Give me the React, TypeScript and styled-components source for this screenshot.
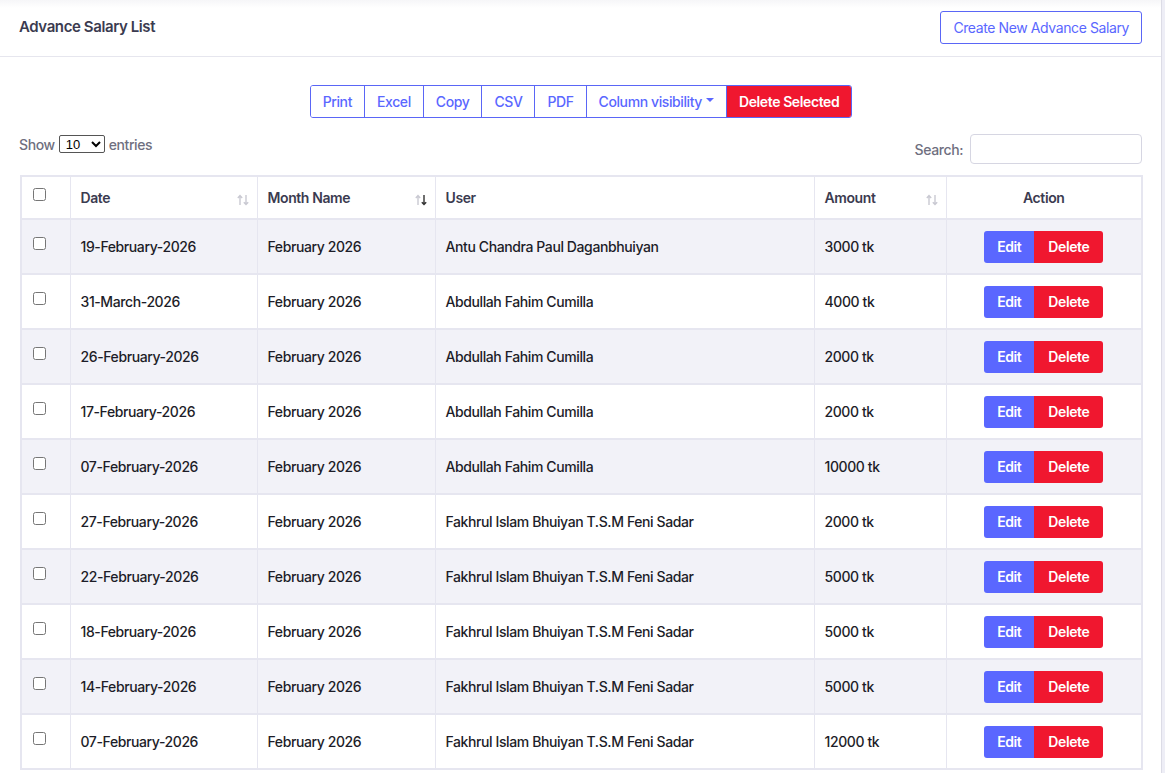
import React from 'react';
import styled, { createGlobalStyle } from 'styled-components'

const GlobalStyle = createGlobalStyle`
  html, body {
    margin: 0;
    padding: 0;
    background: #eeeef6;
    font-family: Inter, "Noto Sans", sans-serif;
    letter-spacing: -0.4px;
  }
`

const rows = [
  { date: '19-February-2026', month: 'February 2026', user: 'Antu Chandra Paul Daganbhuiyan', amount: '3000 tk' },
  { date: '31-March-2026', month: 'February 2026', user: 'Abdullah Fahim Cumilla', amount: '4000 tk' },
  { date: '26-February-2026', month: 'February 2026', user: 'Abdullah Fahim Cumilla', amount: '2000 tk' },
  { date: '17-February-2026', month: 'February 2026', user: 'Abdullah Fahim Cumilla', amount: '2000 tk' },
  { date: '07-February-2026', month: 'February 2026', user: 'Abdullah Fahim Cumilla', amount: '10000 tk' },
  { date: '27-February-2026', month: 'February 2026', user: 'Fakhrul Islam Bhuiyan T.S.M Feni Sadar', amount: '2000 tk' },
  { date: '22-February-2026', month: 'February 2026', user: 'Fakhrul Islam Bhuiyan T.S.M Feni Sadar', amount: '5000 tk' },
  { date: '18-February-2026', month: 'February 2026', user: 'Fakhrul Islam Bhuiyan T.S.M Feni Sadar', amount: '5000 tk' },
  { date: '14-February-2026', month: 'February 2026', user: 'Fakhrul Islam Bhuiyan T.S.M Feni Sadar', amount: '5000 tk' },
  { date: '07-February-2026', month: 'February 2026', user: 'Fakhrul Islam Bhuiyan T.S.M Feni Sadar', amount: '12000 tk' },
]

const exportButtons = ['Print', 'Excel', 'Copy', 'CSV', 'PDF']

const SortIcon = ({ active }: { active?: 'asc' | 'desc' }) => (
  <SortWrap>
    <svg width="14" height="14" viewBox="0 0 14 14">
      <g fill="none" strokeWidth="1.4">
        <path d="M4 12V2.5M1.8 4.8 4 2.5l2.2 2.3" stroke={active === 'asc' ? '#333' : '#c9c9d2'} />
        <path d="M10 2v9.5M7.8 9.2 10 11.5l2.2-2.3" stroke={active === 'desc' ? '#333' : '#c9c9d2'} />
      </g>
    </svg>
  </SortWrap>
)

const App = () => {
  return (
    <>
      <GlobalStyle />
      <Card>
        <CardHeader>
          <Title>Advance Salary List</Title>
          <OutlineButton>Create New Advance Salary</OutlineButton>
        </CardHeader>

        <CardBody>
          <ButtonGroupRow>
            <ButtonGroup>
              {exportButtons.map(label => (
                <GroupButton key={label}>{label}</GroupButton>
              ))}
              <GroupButton>Column visibility<Caret /></GroupButton>
              <GroupButton danger>Delete Selected</GroupButton>
            </ButtonGroup>
          </ButtonGroupRow>

          <ControlsRow>
            <LengthLabel>
              Show
              <LengthSelect defaultValue="10">
                <option value="10">10</option>
                <option value="25">25</option>
                <option value="50">50</option>
              </LengthSelect>
              entries
            </LengthLabel>
            <SearchLabel>
              Search:
              <SearchInput type="search" />
            </SearchLabel>
          </ControlsRow>

          <Table>
            <colgroup>
              <col style={{ width: 49 }} />
              <col style={{ width: 187 }} />
              <col style={{ width: 178 }} />
              <col style={{ width: 379 }} />
              <col style={{ width: 132 }} />
              <col style={{ width: 196 }} />
            </colgroup>
            <thead>
              <tr>
                <Th><Check type="checkbox" /></Th>
                <Th>Date<SortIcon /></Th>
                <Th>Month Name<SortIcon active="desc" /></Th>
                <Th>User</Th>
                <Th>Amount<SortIcon /></Th>
                <Th center>Action</Th>
              </tr>
            </thead>
            <tbody>
              {rows.map((row, index) => (
                <Tr key={index} striped={index % 2 === 0}>
                  <Td><Check type="checkbox" /></Td>
                  <Td>{row.date}</Td>
                  <Td>{row.month}</Td>
                  <Td>{row.user}</Td>
                  <Td>{row.amount}</Td>
                  <Td center>
                    <ActionGroup>
                      <ActionButton>Edit</ActionButton>
                      <ActionButton danger>Delete</ActionButton>
                    </ActionGroup>
                  </Td>
                </Tr>
              ))}
            </tbody>
          </Table>
        </CardBody>
      </Card>
    </>
  );
};

const Card = styled.div`
  width: 1161px;
  min-height: 773px;
  background: #fff;
  box-shadow: 1px 0 0 #dcdce6;
`

const CardHeader = styled.div`
  display: flex;
  align-items: center;
  justify-content: space-between;
  height: 57px;
  padding: 0 19px 4px 19px;
  box-sizing: border-box;
  border-bottom: 1px solid #e6e6ee;
  background: linear-gradient(to bottom, #f6f6f8 0px, #fff 8px);
`

const Title = styled.h5`
  margin: 0;
  font-size: 15px;
  font-weight: 600;
  color: #3b3b50;
`

const OutlineButton = styled.button`
  height: 33px;
  padding: 0 12px;
  margin-top: 2px;
  background: #fff;
  border: 1px solid #5a66f6;
  border-radius: 3px;
  font-family: inherit;
  letter-spacing: inherit;
  font-size: 14px;
  font-weight: 400;
  color: #5a67ff;
`

const CardBody = styled.div`
  padding: 28px 19px 0 20px;
`

const ButtonGroupRow = styled.div`
  display: flex;
  justify-content: center;
  padding-left: 0;
`

const ButtonGroup = styled.div`
  display: flex;
  border: 1px solid #5a66f6;
  border-radius: 3px;
  overflow: hidden;
`

const GroupButton = styled.button<{ danger?: boolean }>`
  display: flex;
  align-items: center;
  height: 31px;
  padding: 0 12px;
  border: none;
  border-left: 1px solid #5a66f6;
  background: ${p => (p.danger ? '#f0172f' : '#fff')};
  color: ${p => (p.danger ? '#fff' : '#5a67ff')};
  font-family: inherit;
  letter-spacing: inherit;
  font-size: 14px;
  font-weight: ${p => (p.danger ? 600 : 500)};
  &:first-child {
    border-left: none;
  }
`

const Caret = styled.span`
  display: inline-block;
  margin-left: 4px;
  margin-top: -3px;
  border-top: 4px solid #5a67ff;
  border-left: 4px solid transparent;
  border-right: 4px solid transparent;
`

const ControlsRow = styled.div`
  display: flex;
  justify-content: space-between;
  align-items: flex-start;
  margin-top: 16px;
  margin-left: -1px;
`

const LengthLabel = styled.label`
  display: flex;
  align-items: center;
  gap: 4px;
  font-size: 14px;
  font-weight: 500;
  color: #6f6f80;
  margin-top: 1px;
`

const LengthSelect = styled.select`
  height: 18px;
  width: 46px;
  font-size: 13px;
  font-family: "Liberation Sans", sans-serif;
  border: 1px solid #555;
  border-radius: 2px;
  padding: 0 0 0 2px;
  background: #fff;
`

const SearchLabel = styled.label`
  display: flex;
  align-items: center;
  gap: 7px;
  font-size: 14px;
  font-weight: 500;
  color: #6f6f80;
`

const SearchInput = styled.input`
  width: 172px;
  height: 30px;
  box-sizing: border-box;
  border: 1px solid #d6d6e2;
  border-radius: 4px;
  outline: none;
`

const Table = styled.table`
  width: 1121px;
  margin-top: 11px;
  border-collapse: collapse;
  table-layout: fixed;
  border: 2px solid #e6e6f0;
  font-size: 14px;
`

const Th = styled.th<{ center?: boolean }>`
  position: relative;
  height: 41px;
  padding: 0 10px;
  text-align: ${p => (p.center ? 'center' : 'left')};
  font-weight: 600;
  color: #3b3b50;
  border: 1px solid #e6e6f0;
  border-bottom: 2px solid #e6e6f0;
  vertical-align: middle;
`

const SortWrap = styled.span`
  position: absolute;
  right: 7px;
  top: 50%;
  transform: translateY(-35%);
  line-height: 0;
`

const Tr = styled.tr<{ striped?: boolean }>`
  background: ${p => (p.striped ? '#f2f2f8' : '#fff')};
`

const Td = styled.td<{ center?: boolean }>`
  height: 53px;
  padding: 0 10px;
  text-align: ${p => (p.center ? 'center' : 'left')};
  font-weight: 500;
  color: #1d1d28;
  border: 1px solid #e6e6f0;
  border-bottom: 2px solid #e6e6f0;
  vertical-align: middle;
`

const Check = styled.input`
  width: 13px;
  height: 13px;
  margin: 0 0 6px 1px;
  vertical-align: middle;
`

const ActionGroup = styled.div`
  display: inline-flex;
  border-radius: 3px;
  overflow: hidden;
`

const ActionButton = styled.button<{ danger?: boolean }>`
  height: 32px;
  padding: 0 ${p => (p.danger ? 14 : 13)}px;
  border: none;
  background: ${p => (p.danger ? '#f0172f' : '#5a67ff')};
  color: #fff;
  font-family: inherit;
  letter-spacing: inherit;
  font-size: 14px;
  font-weight: 600;
`

export default App
